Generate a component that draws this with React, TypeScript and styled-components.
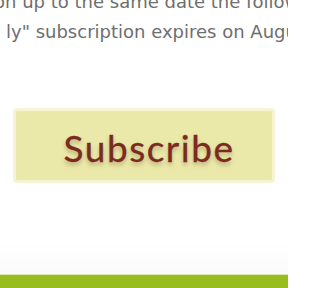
import React from 'react';
import styled, { createGlobalStyle } from 'styled-components';

const GlobalStyle = createGlobalStyle`
	html, body {
		margin: 0;
		padding: 0;
		width: 288px;
		height: 288px;
		background: #fff;
		overflow: hidden;
	}
`;

const Page = styled.div`
	display: flex;
	flex-direction: column;
	width: 288px;
	height: 288px;
	overflow: hidden;
`;

const Content = styled.div`
	flex: 1;
	display: flex;
	flex-direction: column;
	overflow: hidden;
	background: linear-gradient(to bottom, #fff 0%, #fff 88%, #fbfbfb 100%);
`;

const Copy = styled.div`
	margin-top: -13px;
	overflow: hidden;
	font-family: 'DejaVu Sans', Verdana, sans-serif;
	font-size: 18px;
	line-height: 30px;
	color: #6e6e6e;
	white-space: nowrap;
`;

const Line = styled.div<{ $indent: number }>`
	margin-left: ${(p) => p.$indent}px;
`;

const ButtonRow = styled.div`
	display: flex;
	padding: 61px 13px 0 13px;
`;

const Subscribe = styled.button`
	flex: 1;
	height: 75px;
	padding: 4px 0 0 10px;
	border: 3px solid #f6f4d3;
	border-radius: 4px;
	background: #ebe9a9;
	color: #7a2a1f;
	font-family: Lato, 'DejaVu Sans', sans-serif;
	font-size: 37px;
	letter-spacing: 1.5px;
	-webkit-text-stroke: 0.3px #7a2a1f;
	text-shadow: 0 3px 4px rgba(90, 60, 20, 0.35);
	cursor: pointer;
`;

const Footer = styled.div`
	height: 13px;
	border-top: 1px solid #d9e6a9;
	background: #97bd1f;
`;

export default function App() {
	return (
		<>
			<GlobalStyle />
			<Page>
				<Content>
					<Copy>
						<Line $indent={-6}>on up to the same date the following</Line>
						<Line $indent={6}>ly" subscription expires on August</Line>
					</Copy>
					<ButtonRow>
						<Subscribe type="button">Subscribe</Subscribe>
					</ButtonRow>
				</Content>
				<Footer />
			</Page>
		</>
	);
}
